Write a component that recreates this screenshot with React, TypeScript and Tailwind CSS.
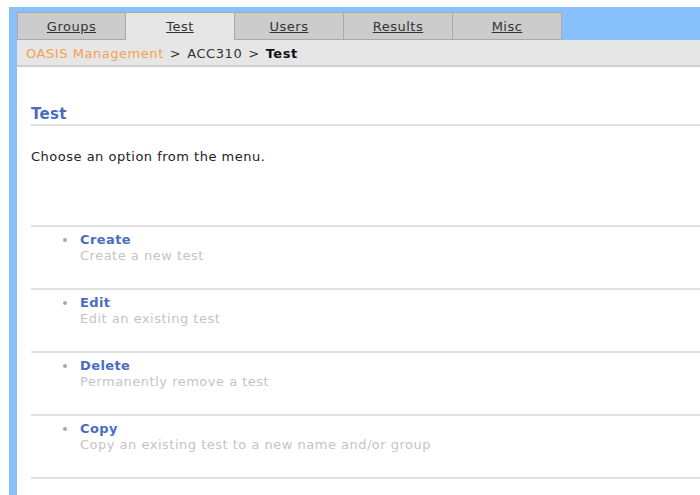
import React from "react";

const tabs = ["Groups", "Test", "Users", "Results", "Misc"];

const options = [
  { title: "Create", desc: "Create a new test" },
  { title: "Edit", desc: "Edit an existing test" },
  { title: "Delete", desc: "Permanently remove a test" },
  { title: "Copy", desc: "Copy an existing test to a new name and/or group" },
];

export default function App() {
  return (
    <div
      className="w-[700px] h-[495px] overflow-hidden bg-white pt-[7px]"
      style={{ fontFamily: '"DejaVu Sans", Verdana, sans-serif' }}
    >
      <div className="ml-[9px] h-[488px] bg-[#88c0fc] pl-[8px] pt-[5px] flex flex-col">
        {/* tab strip */}
        <div className="flex h-[28px] shrink-0">
          {tabs.map((t, i) => {
            const active = t === "Test";
            return (
              <div
                key={t}
                className={
                  "w-[109px] flex items-center justify-center border-t border-r border-[#a9a9a9] text-[13px] tracking-[0.5px] text-[#333] underline " +
                  (i === 0 ? "border-l " : "") +
                  (active ? "bg-[#e6e6e6]" : "bg-[#cccccc] border-b")
                }
              >
                <span className="pt-[1px]">{t}</span>
              </div>
            );
          })}
          <div className="flex-1" />
        </div>

        {/* breadcrumb */}
        <div className="h-[27px] shrink-0 bg-[#e6e6e6] border-b-2 border-[#cfcfcf] pl-[9px] pt-[3px] flex items-center text-[13px] tracking-[0.55px] text-[#333]">
          <span className="text-[#f5a04e]">OASIS Management</span>
          <span className="mx-[6px]">&gt;</span>
          <span>ACC310</span>
          <span className="mx-[6px]">&gt;</span>
          <span className="font-bold text-[#111]">Test</span>
        </div>

        {/* content */}
        <div className="flex-1 bg-white pl-[14px]">
          <div className="mt-[38px] pb-[1px] leading-[18px] border-b-2 border-[#e0e0e0] text-[15px] tracking-[0.3px] font-bold text-[#4a6cc0]">
            Test
          </div>
          <div className="mt-[23px] text-[13px] leading-[16px] tracking-[0.5px] text-[#222]">
            Choose an option from the menu.
          </div>

          <div className="mt-[60px] border-t-2 border-[#e0e0e0]">
            {options.map((o) => (
              <div key={o.title} className="h-[63px] border-b-2 border-[#e0e0e0] pt-[5px] flex">
                <div className="ml-[32px] w-[17px] h-[16px] flex items-center">
                  <span className="block w-[4px] h-[4px] rounded-full bg-[#a8a8a8]" />
                </div>
                <div>
                  <div className="text-[13px] tracking-[0.4px] font-bold text-[#4a6cc0] leading-[16px]">{o.title}</div>
                  <div className="text-[13px] tracking-[0.5px] text-[#c4c4c4] leading-[15px]">{o.desc}</div>
                </div>
              </div>
            ))}
          </div>
        </div>
      </div>
    </div>
  );
}
